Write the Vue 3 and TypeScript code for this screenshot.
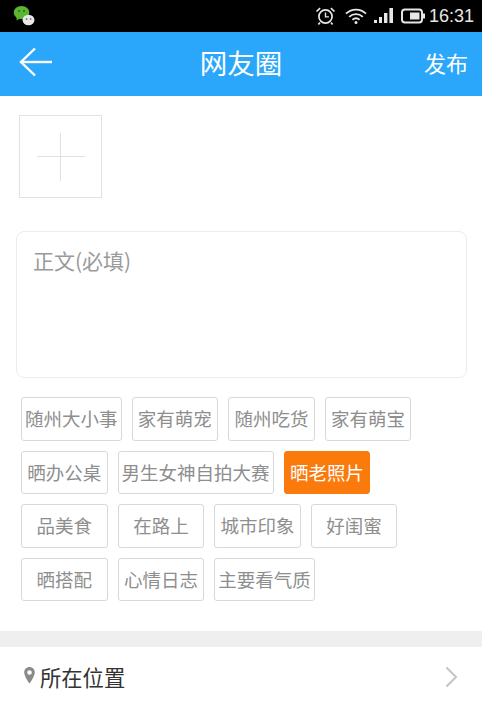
<template>
  <div class="page">
    <div class="status-bar">
      <svg class="wechat" width="24" height="24" viewBox="0 0 24 24">
        <ellipse cx="9.5" cy="9.5" rx="7.8" ry="6.6" fill="#5cb531" />
        <path d="M5 14l-.6 3.4 3.6-2z" fill="#5cb531" />
        <circle cx="7" cy="8" r="1" fill="#2d6a18" />
        <circle cx="12" cy="8" r="1" fill="#2d6a18" />
        <ellipse cx="16.5" cy="17" rx="6" ry="5.2" fill="#e8e8e8" />
        <circle cx="14.6" cy="16" r=".9" fill="#777" />
        <circle cx="18.6" cy="16" r=".9" fill="#777" />
      </svg>
      <div class="status-right">
        <svg width="21" height="20" viewBox="0 0 21 20" fill="none" stroke="#e6e6e6">
          <circle cx="10.5" cy="10.5" r="6.6" stroke-width="1.7" />
          <path d="M10.5 6.5v4.4h3.4" stroke-width="1.4" />
          <path d="M1.5 5.5l3.6-3.4M19.5 5.5l-3.6-3.4M5 16.5l-1.6 2M16 16.5l1.6 2" stroke-width="1.7" />
        </svg>
        <svg class="wifi" width="22" height="18" viewBox="0 0 22 18" fill="none" stroke="#e6e6e6" stroke-width="1.8">
          <path d="M1 6.6c5.6-5.4 14.4-5.4 20 0" />
          <path d="M4.2 9.8c3.8-3.6 9.8-3.6 13.600 0" />
          <path d="M7.4 12.8c2.1-1.8 5.1-1.8 7.2 0" />
          <circle cx="11" cy="15.6" r="1.5" fill="#e6e6e6" stroke="none" />
        </svg>
        <svg class="signal" width="20" height="16" viewBox="0 0 20 16" fill="#e6e6e6">
          <rect x="0" y="12" width="3" height="3" />
          <rect x="5" y="9" width="3" height="6" />
          <rect x="10" y="5" width="3.4" height="10" />
          <rect x="15.4" y="0" width="3.6" height="15" />
        </svg>
        <svg class="battery" width="24" height="16" viewBox="0 0 24 16">
          <rect x="1" y="1.5" width="20" height="13" rx="3" fill="none" stroke="#e6e6e6" stroke-width="2" />
          <rect x="9" y="4.5" width="9.5" height="7" fill="#e6e6e6" />
          <rect x="22" y="5.5" width="2" height="5" fill="#e6e6e6" />
        </svg>
        <span class="clock">16:31</span>
      </div>
    </div>

    <header class="app-header">
      <svg class="back" width="34" height="30" viewBox="0 0 34 30" fill="none" stroke="#fff" stroke-width="2.4">
        <path d="M16 1.5L2 15l14 13.5" />
        <path d="M2 15h31" />
      </svg>
      <h1 class="title">网友圈</h1>
      <span class="publish">发布</span>
    </header>

    <main class="content">
      <div class="add-photo">
        <span class="plus"></span>
      </div>

      <div class="text-card">正文(必填)</div>

      <div class="tags">
        <div v-for="(row, i) in tagRows" :key="i" class="tag-row">
          <span v-for="tag in row" :key="tag" class="tag" :class="{ 'tag--active': tag === activeTag }">{{ tag }}</span>
        </div>
      </div>
    </main>

    <div class="divider"></div>

    <div class="location-row">
      <svg class="pin" width="11" height="17" viewBox="0 0 11 17">
        <path fill-rule="evenodd" d="M5.5 0C2.5 0 .2 2.4.2 5.4c0 3.8 5.3 11.2 5.3 11.2s5.3-7.4 5.3-11.2C10.8 2.4 8.500 0 5.500 0zm0 3.200a2.300 2.300 0 110 4.600 2.300 2.300 0 010-4.600z" fill="#8a8a8a" />
      </svg>
      <span class="location-label">所在位置</span>
      <svg class="chevron" width="13" height="22" viewBox="0 0 13 22" fill="none" stroke="#c4c4c4" stroke-width="2">
        <path d="M1.500 1.500L11 11l-9.500 9.500" />
      </svg>
    </div>
  </div>
</template>

<script setup lang="ts">
const tagRows: string[][] = [
  ['随州大小事', '家有萌宠', '随州吃货', '家有萌宝'],
  ['晒办公桌', '男生女神自拍大赛', '晒老照片'],
  ['品美食', '在路上', '城市印象', '好闺蜜'],
  ['晒搭配', '心情日志', '主要看气质'],
];

const activeTag = '晒老照片';
</script>

<style>
html,
body {
  margin: 0;
  background: #fff;
}
</style>

<style scoped>
.page {
  width: 482px;
  height: 707px;
  overflow: hidden;
  background: #fff;
  font-family: "Noto Sans CJK SC", "Liberation Sans", sans-serif;
}

.status-bar {
  height: 32px;
  box-sizing: border-box;
  background: #000;
  display: flex;
  align-items: center;
  justify-content: space-between;
  padding: 0 8px 0 12px;
}

.wechat {
  margin-top: -2px;
}

.status-right {
  display: flex;
  align-items: center;
}

.wifi {
  margin-left: 9px;
}

.signal {
  margin-left: 7px;
}

.battery {
  margin-left: 7px;
}

.clock {
  margin-left: 4px;
  color: #e6e6e6;
  font-family: "Liberation Sans", sans-serif;
  font-size: 18px;
}

.app-header {
  height: 64px;
  box-sizing: border-box;
  background: #2aa7fb;
  display: grid;
  grid-template-columns: 1fr auto 1fr;
  align-items: center;
  padding: 0 14px 4px;
  color: #fff;
}

.back {
  margin-left: 5px;
}

.title {
  margin: 0;
  font-size: 27.5px;
  font-weight: 400;
}

.publish {
  justify-self: end;
  font-size: 22px;
}

.content {
  height: 535px;
  box-sizing: border-box;
  padding: 19px 15px 0 16px;
}

.add-photo {
  width: 83px;
  height: 83px;
  box-sizing: border-box;
  margin-left: 3px;
  border: 1px solid #e2e2e2;
  display: flex;
  align-items: center;
  justify-content: center;
}

.plus {
  display: block;
  width: 48px;
  height: 48px;
  background:
    linear-gradient(#e0e0e0, #e0e0e0) center / 48px 1px no-repeat,
    linear-gradient(#e0e0e0, #e0e0e0) center / 1px 48px no-repeat;
}

.text-card {
  height: 147px;
  box-sizing: border-box;
  margin-top: 33px;
  padding: 12px 16px;
  border: 1px solid #ececec;
  border-radius: 8px;
  color: #9a9a9a;
  font-size: 21px;
  line-height: 32px;
}

.tags {
  display: flex;
  flex-direction: column;
  gap: 10px;
  margin-top: 19px;
  padding-left: 5px;
}

.tag-row {
  display: flex;
  gap: 10px;
}

.tag {
  min-width: 86.6px;
  height: 43.6px;
  box-sizing: border-box;
  padding: 0 3px;
  border: 1px solid #d8d8d8;
  border-radius: 3px;
  color: #8e8e8e;
  font-size: 18.5px;
  line-height: 41.6px;
  text-align: center;
  white-space: nowrap;
}

.tag--active {
  background: #fb7a0c;
  border-color: #fb7a0c;
  color: #fff;
}

.divider {
  height: 16px;
  background: #efefef;
}

.location-row {
  height: 60px;
  box-sizing: border-box;
  display: flex;
  align-items: center;
  padding: 0 24px;
  color: #333;
}

.pin {
  margin-top: -4px;
}

.location-label {
  margin: -2px 0 0 5px;
  font-size: 21.3px;
}

.chevron {
  margin-left: auto;
}
</style>
